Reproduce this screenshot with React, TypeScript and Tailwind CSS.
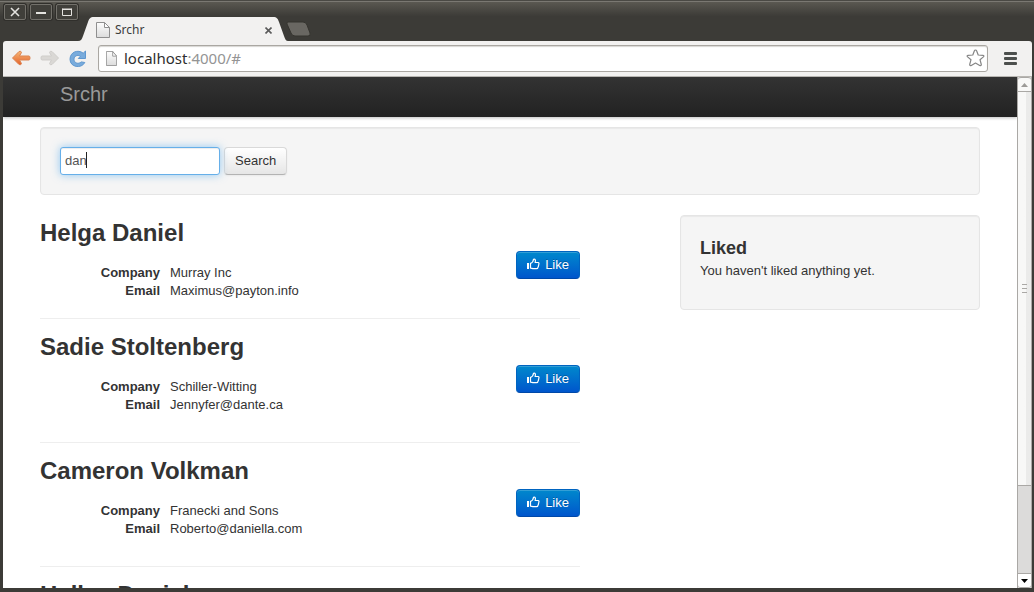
import { useState } from "react";

type Person = { name: string; company: string; email: string };

const people: Person[] = [
  { name: "Helga Daniel", company: "Murray Inc", email: "Maximus@payton.info" },
  { name: "Sadie Stoltenberg", company: "Schiller-Witting", email: "Jennyfer@dante.ca" },
  { name: "Cameron Volkman", company: "Franecki and Sons", email: "Roberto@daniella.com" },
  { name: "Hallee Daniel", company: "Daniel Group", email: "Hallee@daniel.net" },
];

function PageIcon({ className }: { className: string }) {
  return (
    <svg className={className} viewBox="0 0 14 16" preserveAspectRatio="none" aria-hidden="true">
      <defs>
        <linearGradient id="sheet" x1="0" y1="0" x2="0" y2="1">
          <stop offset="0" stopColor="#fdfdfd" />
          <stop offset="1" stopColor="#dcdcdc" />
        </linearGradient>
      </defs>
      <path d="M.5.5h8l5 5v10H.5z" fill="url(#sheet)" stroke="#8f8f8f" />
      <path d="M8.5.5v5h5z" fill="#fff" stroke="#8f8f8f" />
    </svg>
  );
}

function ThumbIcon() {
  return (
    <svg width="14" height="14" viewBox="0 0 14 14" fill="none" stroke="#fff" aria-hidden="true">
      <path d="M0 5h2v6H0z" fill="#fff" stroke="none" />
      <path
        d="M3.500 5.300C5 5 6.300 3.400 6.500 1.300c1.700-.6 2.400.7 1.600 3.200h3.200c.8.200.9 1.100.4 1.600.3.700.1 1.300-.3 1.700.1.700-.1 1.200-.5 1.600 0 .9-.6 1.300-1.500 1.300H6.500c-1.200 0-1.800-.6-3-.6z"
        strokeWidth="1.2"
        strokeLinejoin="round"
      />
    </svg>
  );
}

const windowButton =
  "flex h-4 w-[22px] items-center justify-center rounded-[2px] border border-[#73716b] bg-[#403f3a] shadow-[0_0_0_1px_#302f2b]";

function TitleBar() {
  return (
    <header className="flex h-[41px] shrink-0 items-start bg-linear-to-b from-[#5a5851] from-5% to-[#3c3b37] to-40% pl-1 shadow-[inset_0_1px_0_#4a4944,inset_0_2px_0_#7a7872]">
      <div className="flex gap-1 pt-1">
        <button type="button" aria-label="Close window" className={windowButton}>
          <svg width="10" height="10" viewBox="0 0 10 10" stroke="#e4e3df" strokeWidth="1.6">
            <path d="M1 1l8 8M9 1L1 9" />
          </svg>
        </button>
        <button type="button" aria-label="Minimize window" className={windowButton}>
          <svg width="10" height="10" viewBox="0 0 10 10" fill="#e4e3df">
            <path d="M0 5h10v2H0z" />
          </svg>
        </button>
        <button type="button" aria-label="Maximize window" className={windowButton}>
          <svg width="10" height="8" viewBox="0 0 10 8" fill="none" stroke="#e4e3df">
            <path d="M.5 1h9M.5.5v7h9v-7M0 1.500h10" />
          </svg>
        </button>
      </div>
      <div className="relative mt-[17px] flex h-6 w-[210px] items-center pr-3 pl-[18px]">
        <svg className="absolute inset-0" width="210" height="24" viewBox="0 0 210 24" aria-hidden="true">
          <path
            d="M0 24c3 0 4-2 5-5L10 5c1-3 2-5 6-5h179c4 0 5 2 6 5l5 14c1 3 2 5 4 5z"
            fill="#f2f1f0"
          />
        </svg>
        <PageIcon className="relative mt-[2px] h-4 w-[14px]" />
        <span className="relative mt-[2px] ml-[5px] flex-1 font-['Noto_Sans',sans-serif] text-[12px] leading-4 text-[#3c3c3c]">
          Srchr
        </span>
        <button type="button" aria-label="Close tab" className="relative mt-[2px] p-1">
          <svg className="block" width="7" height="7" viewBox="0 0 7 7" stroke="#5a5a5a" strokeWidth="1.6">
            <path d="M.5.5l6 6M6.500.5l-6 6" />
          </svg>
        </button>
      </div>
      <button type="button" aria-label="New tab" className="mt-[21px] -ml-[3px]">
        <svg width="26" height="16" viewBox="0 0 26 16">
          <path d="M3 1h15q3 0 4 3l3 8q1 3-2 3H10q-3 0-4-3L2 3Q1.500 1 3 1z" fill="#696762" stroke="#35342f" />
        </svg>
      </button>
    </header>
  );
}

function Toolbar() {
  return (
    <div className="flex h-9 shrink-0 items-center rounded-t-[3px] border-b border-[#b8b6b2] bg-[#f2f1f0] pr-[15px] pl-2">
      <button type="button" aria-label="Back">
        <svg width="20" height="18" viewBox="0 0 20 18">
          <defs>
            <linearGradient id="back" x1="0" y1="0" x2="0" y2="1">
              <stop offset="0" stopColor="#f6b878" />
              <stop offset="1" stopColor="#e4622a" />
            </linearGradient>
          </defs>
          <path
            d="M1.500 8L8 1.500q2-1 2.500 1L8.500 6H18q1 0 1 2t-1 2H8.500l2 3.500q-.5 2-2.500 1z"
            fill="url(#back)"
            stroke="#dc8350"
            strokeLinejoin="round"
          />
        </svg>
      </button>
      <button type="button" aria-label="Forward" className="ml-[9px]">
        <svg width="20" height="18" viewBox="0 0 20 18">
          <path
            d="M18.500 8L12 1.500q-2-1-2.500 1l2 3.500H2Q1 6 1 8t1 2h9.500l-2 3.500q.5 2 2.500 1z"
            fill="#dad8d5"
            stroke="#cfcdca"
            strokeLinejoin="round"
          />
        </svg>
      </button>
      <button type="button" aria-label="Reload" className="ml-[9px]">
        <svg width="20" height="18" viewBox="0 0 20 18">
          <path
            d="M14.200 3.200L16.500 1v7.500H9.300l2.100-2.200C8.500 4.300 5 6 5 9.300c0 3.800 4.600 5.300 7.200 2.600l3.600.6C12.500 19 1 17.500 1 9.300 1 2 9 -1 14.200 3.200z"
            fill="#78abdc"
            stroke="#5f97cf"
            strokeLinejoin="round"
          />
        </svg>
      </button>
      <div className="ml-[9px] flex h-[27px] flex-1 items-center rounded-[3px] border border-[#aaa7a2] bg-white px-[7px] font-['Noto_Sans',sans-serif] text-[15px] shadow-[inset_0_1px_1px_#d8d6d3]">
        <PageIcon className="h-[15px] w-[11px]" />
        <a href="#" className="ml-[7px] flex-1 text-[#2e2e2e]">
          localhost<span className="text-[#949494]">:4000/#</span>
        </a>
        <button type="button" aria-label="Bookmark this page" className="-mr-[5px]">
          <svg width="19" height="19" viewBox="0 0 19 19" fill="#fff" stroke="#858585" strokeWidth="1.2" strokeLinejoin="round">
            <path d="M9.500 1q.8 0 1.200 1l1.500 4 4.800.3q1.600.4.4 1.600L14 10.700l1.300 4.800q0 1.700-1.600.9L9.500 14l-4.200 2.400q-1.600.8-1.600-.9L5 10.700 1.600 7.900Q.4 6.700 2 6.300L6.800 6l1.500-4Q8.700 1 9.500 1z" />
          </svg>
        </button>
      </div>
      <button type="button" aria-label="Menu" className="ml-4">
        <svg width="13" height="14" viewBox="0 0 13 14" fill="#4c4f4d">
          <rect width="13" height="3" y="0" rx="1" />
          <rect width="13" height="3" y="5" rx="1" />
          <rect width="13" height="3" y="10" rx="1" />
        </svg>
      </button>
    </div>
  );
}

function Result({ person }: { person: Person }) {
  return (
    <li className="flex items-start justify-between border-b border-[#eee] pt-[10px] pb-7 first:pt-0 first:pb-[18px]">
      <div>
        <h2 className="text-[24px] leading-9 font-bold whitespace-nowrap">{person.name}</h2>
        <dl className="mt-[13px] grid grid-cols-[120px_1fr] gap-x-[10px]">
          <dt className="text-right font-bold">Company</dt>
          <dd>{person.company}</dd>
          <dt className="text-right font-bold">Email</dt>
          <dd>{person.email}</dd>
        </dl>
      </div>
      <button
        type="button"
        className="mt-9 flex h-7 items-center gap-1 rounded-[4px] border border-[#0064c0] border-b-[#0048a8] bg-linear-to-b from-[#0088cc] to-[#0055cc] px-[10px] text-white shadow-[inset_0_1px_0_rgba(255,255,255,0.2)] text-shadow-[0_-1px_0_rgba(0,0,0,0.25)]"
      >
        <ThumbIcon />
        Like
      </button>
    </li>
  );
}

const well = "rounded-[4px] border border-[#e5e5e5] bg-[#f5f5f5] p-[19px] shadow-[inset_0_1px_1px_rgba(0,0,0,0.05)]";

function Page() {
  const [query, setQuery] = useState("dan");
  return (
    <main className="min-w-0 flex-1 overflow-hidden bg-white font-['Liberation_Sans',Arial,sans-serif] text-[13px] leading-[18px] text-[#333]">
      <nav className="bg-linear-to-b from-[#333] to-[#222] shadow-[0_1px_3px_rgba(0,0,0,0.25)]">
        <div className="mx-auto flex h-10 max-w-[940px] items-start px-5 pt-[7px]">
          <a href="#" className="text-[20px] leading-5 text-[#999]">
            Srchr
          </a>
        </div>
      </nav>
      <div className="mx-auto max-w-[940px] pt-[10px]">
        <form className={`flex h-[68px] items-start gap-1 ${well}`} onSubmit={(e) => e.preventDefault()}>
          <div className="relative">
            <input
              type="text"
              aria-label="Search people"
              value={query}
              onChange={(e) => setQuery(e.target.value)}
              className="block h-7 w-40 rounded-[3px] border border-[#66afe9] bg-white px-1 pb-[2px] text-[#555] shadow-[inset_0_1px_1px_rgba(0,0,0,0.075),0_0_8px_rgba(82,168,236,0.6)] outline-none"
            />
            <span className="absolute top-[5px] left-[26px] h-4 w-px bg-[#222]" />
          </div>
          <button
            type="submit"
            className="h-7 rounded-[4px] border border-[#d9d9d9] border-b-[#b3b3b3] bg-linear-to-b from-white to-[#e6e6e6] px-[10px] shadow-[0_1px_2px_rgba(0,0,0,0.05)]"
          >
            Search
          </button>
        </form>
        <div className="mt-5 flex items-start justify-between">
          <ul className="w-[540px]">
            {people.map((p) => (
              <Result key={p.name} person={p} />
            ))}
          </ul>
          <aside className={`w-[300px] ${well}`}>
            <h3 className="text-[18px] leading-[27px] font-bold">Liked</h3>
            <p className="mb-[10px]">You haven't liked anything yet.</p>
          </aside>
        </div>
      </div>
    </main>
  );
}

function ScrollBar() {
  return (
    <div className="flex w-[15px] shrink-0 flex-col border border-y-0 border-[#aaa8a5] bg-[#dcdbda]">
      <button
        type="button"
        aria-label="Scroll up"
        className="flex h-[15px] items-center justify-center rounded-t-[3px] border-y border-[#aaa8a5] bg-[#f8f8f7]"
      >
        <svg width="7" height="4" viewBox="0 0 7 4" fill="#9d9b98">
          <path d="M0 4L3.500 0 7 4z" />
        </svg>
      </button>
      <div className="flex-1">
        <div className="flex h-[82%] flex-col items-center justify-center gap-[3px] border-b border-[#aaa8a5] bg-linear-to-r from-[#f8f8f7] from-60% to-[#ebebea] to-60%">
          <span className="h-px w-[5px] bg-[#aaa8a5]" />
          <span className="h-px w-[5px] bg-[#aaa8a5]" />
          <span className="h-px w-[5px] bg-[#aaa8a5]" />
        </div>
      </div>
      <button
        type="button"
        aria-label="Scroll down"
        className="flex h-[15px] items-center justify-center rounded-b-[3px] border-y border-[#aaa8a5] bg-white"
      >
        <svg width="7" height="4" viewBox="0 0 7 4" fill="#000">
          <path d="M0 0h7L3.500 4z" />
        </svg>
      </button>
    </div>
  );
}

export default function App() {
  return (
    <div className="flex h-screen flex-col overflow-hidden bg-[#3c3b37]">
      <TitleBar />
      <div className="flex min-h-0 flex-1 flex-col border-x-[3px] border-r-2 border-b-4 border-[#3c3b37]">
        <Toolbar />
        <div className="flex min-h-0 flex-1">
          <Page />
          <ScrollBar />
        </div>
      </div>
    </div>
  );
}
